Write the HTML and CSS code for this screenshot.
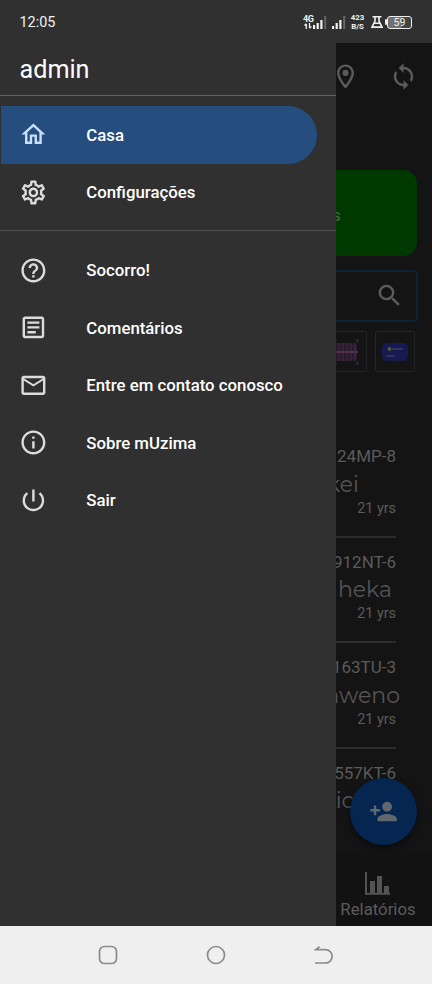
FILE: index.html
```html
<!DOCTYPE html>
<html lang="pt">
<head>
<meta charset="utf-8">
<title>mUzima</title>
<link rel="stylesheet" href="styles.css">
</head>
<body>
<div class="phone">
  <header class="status">
    <span class="clock">12:05</span>
    <div class="indicators">
      <div class="network"><span>4G</span><svg width="8" height="6" viewBox="0 0 8 6"><path d="M2.3 6V1M.5 2.5 2.3.8M5.5 0v5M7.3 3.5 5.5 5.2" stroke="#eee" stroke-width="1.3" fill="none"/></svg></div>
      <svg class="signal" width="14" height="13" viewBox="0 0 14 13"><path d="M1 9v4M4.7 7v6M8.4 4v9" stroke="#f2f2f2" stroke-width="2.2"/><path d="M12.2 0v13" stroke="#666" stroke-width="2"/></svg>
      <svg class="signal second" width="14" height="13" viewBox="0 0 14 13"><path d="M1 10v3M4.7 7v6M8.4 4v9" stroke="#f2f2f2" stroke-width="2.2"/><path d="M12.2 0v13" stroke="#666" stroke-width="2"/></svg>
      <div class="speed"><span>423</span><span>B/S</span></div>
      <svg class="flask" width="12" height="12" viewBox="0 0 12 12"><path d="M1.5.8h9M4 1v4L1 11.1h10L8 5V1M3.3 7.2h5.4" fill="none" stroke="#f2f2f2" stroke-width="1.6"/></svg>
      <svg class="battery-tip" width="2" height="6"><rect width="2" height="6" rx="1" fill="#eee"/></svg>
      <span class="battery">59</span>
    </div>
  </header>

  <main class="stage">
    <nav class="drawer">
      <h1>admin</h1>
      <ul class="menu">
        <li class="item active"><svg viewBox="0 0 24 24"><path d="m12 5.69 5 4.5V18h-2v-6H9v6H7v-7.81l5-4.5M12 3 2 12h3v8h6v-6h2v6h6v-8h3L12 3z"/></svg><span>Casa</span></li>
        <li class="item"><svg viewBox="0 0 24 24"><path d="M19.43 12.98c.04-.32.07-.64.07-.98 0-.34-.03-.66-.07-.98l2.11-1.65c.19-.15.24-.42.12-.64l-2-3.46c-.09-.16-.26-.25-.44-.25-.06 0-.12.01-.17.03l-2.49 1c-.52-.4-1.08-.73-1.69-.98l-.38-2.65C14.46 2.18 14.25 2 14 2h-4c-.25 0-.46.18-.49.42l-.38 2.65c-.61.25-1.17.59-1.69.98l-2.49-1c-.06-.02-.12-.03-.18-.03-.17 0-.34.09-.43.25l-2 3.46c-.13.22-.07.49.12.64l2.11 1.65c-.04.32-.07.65-.07.98 0 .33.03.66.07.98l-2.11 1.65c-.19.15-.24.42-.12.64l2 3.46c.09.16.26.25.44.25.06 0 .12-.01.17-.03l2.49-1c.52.4 1.08.73 1.69.98l.38 2.65c.03.24.24.42.49.42h4c.25 0 .46-.18.49-.42l.38-2.65c.61-.25 1.17-.59 1.69-.98l2.49 1c.06.02.12.03.18.03.17 0 .34-.09.43-.25l2-3.46c.12-.22.07-.49-.12-.64l-2.11-1.65zm-1.98-1.71c.04.31.05.52.05.73 0 .21-.02.43-.05.73l-.14 1.13.89.7 1.08.84-.7 1.21-1.27-.51-1.04-.42-.9.68c-.43.32-.84.56-1.25.73l-1.06.43-.16 1.13-.2 1.35h-1.4l-.19-1.35-.16-1.13-1.06-.43c-.43-.18-.83-.41-1.23-.71l-.91-.7-1.06.43-1.27.51-.7-1.21 1.08-.84.89-.7-.14-1.13c-.03-.31-.05-.54-.05-.74s.02-.43.05-.73l.14-1.13-.89-.7-1.08-.84.7-1.21 1.27.51 1.04.42.9-.68c.43-.32.84-.56 1.25-.73l1.06-.43.16-1.13.2-1.35h1.39l.19 1.35.16 1.13 1.06.43c.43.18.83.41 1.23.71l.91.7 1.06-.43 1.27-.51.7 1.21-1.07.85-.89.7.14 1.13zM12 8c-2.210 0-4 1.790-4 4s1.790 4 4 4 4-1.790 4-4-1.790-4-4-4zm0 6c-1.100 0-2-.9-2-2s.9-2 2-2 2 .9 2 2-.9 2-2 2z"/></svg><span>Configurações</span></li>
      </ul>
      <ul class="menu support">
        <li class="item"><svg viewBox="0 0 24 24"><path d="M11 18h2v-2h-2v2zm1-16C6.480 2 2 6.480 2 12s4.480 10 10 10 10-4.480 10-10S17.520 2 12 2zm0 18c-4.410 0-8-3.590-8-8s3.590-8 8-8 8 3.590 8 8-3.590 8-8 8zm0-14c-2.210 0-4 1.790-4 4h2c0-1.100.9-2 2-2s2 .9 2 2c0 2-3 1.750-3 5h2c0-2.250 3-2.500 3-5 0-2.210-1.790-4-4-4z"/></svg><span>Socorro!</span></li>
        <li class="item"><svg viewBox="0 0 24 24"><path d="M19 5v14H5V5h14m0-2H5c-1.100 0-2 .9-2 2v14c0 1.100.9 2 2 2h14c1.100 0 2-.9 2-2V5c0-1.100-.9-2-2-2zm-5 14H7v-2h7v2zm3-4H7v-2h10v2zm0-4H7V7h10v2z"/></svg><span>Comentários</span></li>
        <li class="item"><svg viewBox="0 0 24 24"><path d="M22 6c0-1.100-.9-2-2-2H4c-1.100 0-2 .9-2 2v12c0 1.100.9 2 2 2h16c1.100 0 2-.9 2-2V6zm-2 0-8 5-8-5h16zm0 12H4V8l8 5 8-5v10z"/></svg><span>Entre em contato conosco</span></li>
        <li class="item"><svg viewBox="0 0 24 24"><path d="M11 7h2v2h-2zm0 4h2v6h-2zm1-9C6.480 2 2 6.480 2 12s4.480 10 10 10 10-4.480 10-10S17.520 2 12 2zm0 18c-4.410 0-8-3.590-8-8s3.590-8 8-8 8 3.590 8 8-3.590 8-8 8z"/></svg><span>Sobre mUzima</span></li>
        <li class="item"><svg viewBox="0 0 24 24"><path d="M13 3h-2v10h2V3zm4.830 2.170-1.420 1.420C17.990 7.860 19 9.810 19 12c0 3.870-3.130 7-7 7s-7-3.130-7-7c0-2.190 1.010-4.140 2.580-5.420L6.170 5.170C4.230 6.820 3 9.260 3 12c0 4.970 4.030 9 9 9s9-4.030 9-9c0-2.740-1.230-5.180-3.170-6.830z"/></svg><span>Sair</span></li>
      </ul>
    </nav>

    <section class="page">
      <div class="toolbar">
        <svg width="29" height="29" viewBox="0 0 24 24"><path d="M12 2C8.130 2 5 5.130 5 9c0 5.250 7 13 7 13s7-7.750 7-13c0-3.870-3.130-7-7-7zM7 9c0-2.760 2.240-5 5-5s5 2.240 5 5c0 2.880-2.880 7.190-5 9.880C9.920 16.210 7 11.850 7 9z"/><circle cx="12" cy="9" r="2.500"/></svg>
        <svg width="29" height="29" viewBox="0 0 24 24"><path d="M12 4V1L8 5l4 4V6c3.310 0 6 2.690 6 6 0 1.010-.25 1.970-.7 2.800l1.460 1.460C19.540 15.030 20 13.570 20 12c0-4.420-3.580-8-8-8zm0 14c-3.310 0-6-2.690-6-6 0-1.010.25-1.970.7-2.800L5.240 7.740C4.460 8.970 4 10.430 4 12c0 4.420 3.580 8 8 8v3l4-4-4-4v3z"/></svg>
      </div>
      <div class="banner">s</div>
      <div class="search"><svg width="29" height="29" viewBox="0 0 24 24"><path d="M15.500 14h-.79l-.28-.27A6.470 6.470 0 0 0 16 9.500 6.500 6.500 0 1 0 9.500 16c1.610 0 3.090-.59 4.230-1.570l.27.28v.79l5 4.990L20.490 19l-4.990-5zm-6 0a4.500 4.500 0 1 1 0-9 4.500 4.500 0 0 1 0 9z"/></svg></div>
      <div class="tools">
        <div class="tile"><svg width="28" height="28" viewBox="0 0 28 28"><path d="M1 5V2h3M22 2h3v3M1 23v3h3M22 26h3v-3" fill="none" stroke="#393239" stroke-width="1.200"/><path d="M3 5h21v18H3z" fill="#291a2c"/><path d="M6 5v18M10 5v18M14 5v18M18 5v18M22 5v18" stroke="#3a273e" stroke-width="1.500"/><path d="M1 14h24" stroke="#51304e" stroke-width="2"/></svg></div>
        <div class="tile"><svg width="28" height="28" viewBox="0 0 28 28"><rect x="1" y="5" width="26" height="18" rx="5" fill="#171a50"/><circle cx="8.500" cy="11" r="1.900" fill="#5a5834"/><path d="M12 11h9M6 18h7" stroke="#383f62" stroke-width="1.700" stroke-linecap="round"/></svg></div>
      </div>
      <div class="patients">
        <article class="patient"><span class="code">24MP-8</span><span class="name kei">kei</span><span class="age">21 yrs</span></article>
        <article class="patient"><span class="code">912NT-6</span><span class="name heka">heka</span><span class="age">21 yrs</span></article>
        <article class="patient"><span class="code">163TU-3</span><span class="name aweno">aweno</span><span class="age">21 yrs</span></article>
        <article class="patient"><span class="code">557KT-6</span><span class="name ic">ic</span></article>
      </div>
      <div class="fab"><svg width="29" height="29" viewBox="0 0 24 24"><path d="M15 12c2.210 0 4-1.790 4-4s-1.790-4-4-4-4 1.790-4 4 1.790 4 4 4zm-9-2V7H4v3H1v2h3v3h2v-3h3v-2H6zm9 4c-2.670 0-8 1.340-8 4v2h16v-2c0-2.660-5.330-4-8-4z"/></svg></div>
      <div class="reports"><svg width="26" height="23" viewBox="0 0 26 23"><path d="M1 0v21.700h24" fill="none" stroke="#535353" stroke-width="2"/><path d="M5 9h5v12H5zM12 4h5v17h-5zM19 14h5v7h-5z" fill="#535353"/></svg><span>Relatórios</span></div>
    </section>
  </main>

  <footer class="navbar">
    <svg viewBox="0 0 20 20"><rect x="1.500" y="1.500" width="17" height="17" rx="5"/></svg>
    <svg viewBox="0 0 20 20"><circle cx="10" cy="10" r="8.500"/></svg>
    <svg viewBox="0 0 20 20"><path d="M1 18h10.500a6.700 6.700 0 0 0 0-13.400H1.800L5.500 1.800"/></svg>
  </footer>
</div>
</body>
</html>
```

FILE: styles.css
```css
* { box-sizing: border-box; }
body { margin: 0; font-family: Roboto, "Liberation Sans", sans-serif; }
svg { display: block; flex: none; }
.phone { width: 432px; height: 984px; display: flex; flex-direction: column; background: #303030; overflow: hidden; }

.status { height: 43px; flex: none; display: flex; align-items: center; justify-content: space-between; padding: 1px 20px 0 19.500px; color: #f2f2f2; }
.clock { font-size: 14.400px; }
.indicators { display: flex; align-items: center; height: 22px; }
.network { font-size: 9px; font-weight: 700; line-height: 8px; width: 11px; height: 14px; letter-spacing: -.4px; }
.network svg { margin-left: 1px; }
.signal { margin-left: -1px; }
.signal.second { margin-left: 4.500px; }
.speed { display: flex; flex-direction: column; align-items: center; width: 14px; margin-left: 5px; font-size: 7.800px; line-height: 9px; font-weight: 700; }
.flask { margin-left: 6px; }
.battery-tip { margin-left: 2.500px; }
.battery { width: 25px; height: 13px; border: 1.500px solid #eee; border-radius: 3px; font-size: 10.500px; line-height: 11px; text-align: center; background: linear-gradient(90deg, #707070 59%, #444 59%); }

.stage { flex: 1; min-height: 0; display: flex; }
.drawer { width: 336px; flex: none; background: #303030; }
.drawer h1 { margin: 0; height: 53px; padding: 10.500px 0 0 19.500px; border-bottom: 1px solid #606060; font-size: 25.200px; line-height: 32px; font-weight: 400; color: #fff; }
.menu { list-style: none; margin: 0; padding: 10px 19px 9px 1px; }
.support { border-top: 1px solid #505050; padding-top: 10px; }
.item { height: 57.600px; display: flex; align-items: center; padding-left: 18px; border-radius: 0 29px 29px 0; color: #fff; font-size: 16.800px; font-weight: 500; }
.item svg { width: 28.800px; height: 28.800px; fill: #dcdcdc; margin-right: 38.500px; }
.active { background: #254d7d; }
.active svg { fill: #c9defa; }

.page { flex: 1; min-width: 0; position: relative; overflow: hidden; background: #141414; display: flex; flex-direction: column; color: #5b5b5b; }
.toolbar { height: 127px; padding: 19px 14px 0 0; display: flex; justify-content: flex-end; gap: 29px; }
.toolbar svg, .search svg { fill: #5b5b5b; }
.banner { height: 86px; flex: none; margin-right: 15px; border-radius: 0 14px 14px 0; background: #003900; color: #4c674c; font-size: 17px; line-height: 90px; text-indent: -4px; }
.search { height: 52px; flex: none; margin: 14px 14px 0 0; border: 2px solid #0b2237; border-left: 0; border-radius: 0 4px 4px 0; display: flex; align-items: center; justify-content: flex-end; padding: 0 12.500px 1px 0; }
.tools { display: flex; justify-content: flex-end; gap: 8px; padding-right: 17px; margin-top: 9px; height: 42px; flex: none; }
.tile { width: 40px; height: 41px; flex: none; border: 1px solid #272727; border-radius: 3px; display: grid; place-items: center; }
.patients { margin: 59px 0 0; flex: none; }
.patient { height: 105.600px; margin-right: 36px; border-bottom: 2px solid #2d2d2d; display: flex; flex-direction: column; align-items: flex-end; padding-top: 12px; white-space: nowrap; }
.patient:last-child { border: 0; height: 94px; }
.code { font-size: 17px; line-height: 24px; }
.name { font-family: Montserrat, Inter, sans-serif; font-weight: 400; font-size: 22px; line-height: 30px; margin-top: 1.500px; color: #555; }
.kei { margin-right: 37px; }
.heka { margin-right: 4px; }
.aweno { margin-right: -4px; }
.ic { margin-right: 42px; }
.age { font-size: 14.400px; line-height: 18px; }
.fab { position: absolute; right: 15px; top: 735px; width: 67px; height: 67px; border-radius: 50%; background: #052650; display: grid; place-items: center; box-shadow: 0 3px 7px #0008; }
.fab svg { fill: #60676f; }
.reports { position: absolute; left: 0; right: 0; bottom: 0; height: 74px; background: #121212; display: flex; flex-direction: column; align-items: center; padding: 20px 12px 0 0; font-size: 16.800px; line-height: 24px; }
.reports svg { margin-bottom: 2px; }

.navbar { height: 58px; flex: none; background: #efefef; display: flex; justify-content: center; align-items: center; gap: 88px; }
.navbar svg { width: 20px; height: 20px; fill: none; stroke: #8b8b8b; stroke-width: 1.700; }
```
